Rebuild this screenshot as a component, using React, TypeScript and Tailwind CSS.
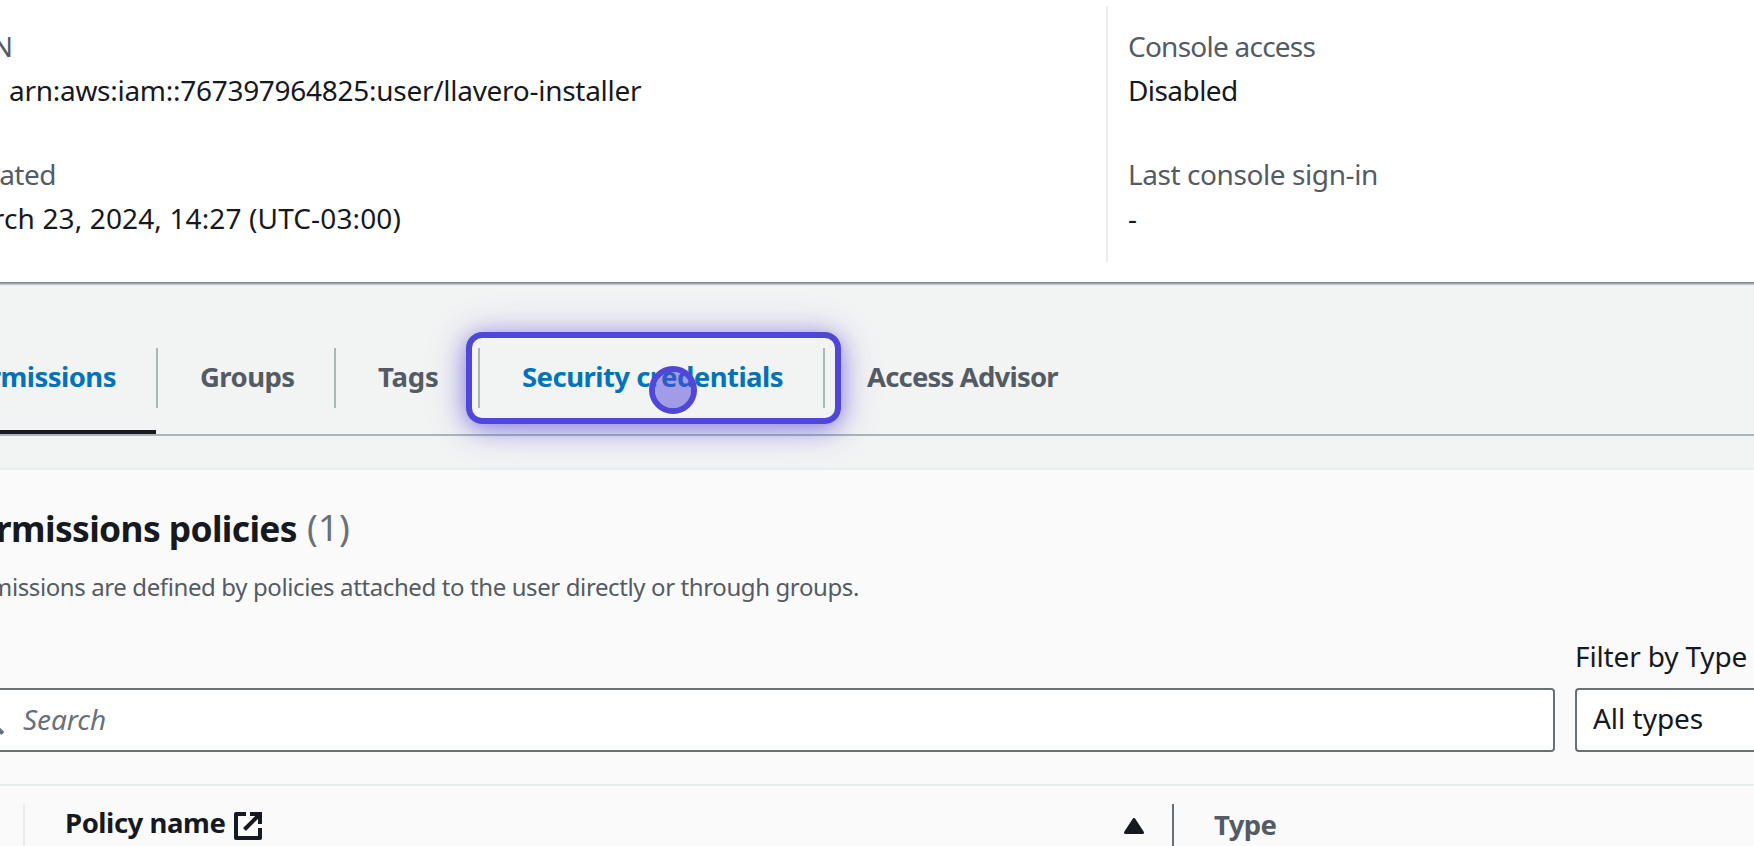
import type { ReactNode } from "react";

/** Text that runs off the left edge of the viewport; its end sits at the box's right edge. */
function Clipped({ className, children }: { className: string; children: ReactNode }) {
  return <div className={`flex justify-end overflow-hidden ${className}`}>{children}</div>;
}

function Separator() {
  return <span className="h-[60px] w-[2px] shrink-0 bg-[#aab7b8]" />;
}

function ExternalIcon() {
  return (
    <svg width="28" height="28" viewBox="0 0 28 28" fill="none" stroke="#16191f" strokeWidth="4">
      <path d="M12 2H2V26H26V16" strokeLinejoin="round" />
      <path d="M16 2H26V12" />
      <path d="M26 2L10.5 17.5" />
    </svg>
  );
}

function Summary() {
  return (
    <section className="relative -mx-4 flex h-[282px] items-start bg-white px-4 pt-[6px] shadow-[0_2px_2px_0_rgba(0,28,36,0.3),2px_2px_2px_0_rgba(0,28,36,0.15),-2px_2px_2px_0_rgba(0,28,36,0.15)]">
      <div className="w-[1106px] shrink-0 pt-[18px]">
        <Clipped className="w-[13px] text-[#545b64]">ARN</Clipped>
        <div className="pl-[9px] tracking-[-0.28px]">arn:aws:iam::767397964825:user/llavero-installer</div>
        <Clipped className="mt-10 w-[56px] tracking-[-0.5px] text-[#545b64]">Created</Clipped>
        <Clipped className="w-[401px] tracking-[0.13px]">March 23, 2024, 14:27 (UTC-03:00)</Clipped>
      </div>
      <div className="h-[256px] border-l-2 border-[#eaeded] pt-[18px] pl-5">
        <div className="tracking-[-0.76px] text-[#545b64]">Console access</div>
        <div className="tracking-[-0.57px]">Disabled</div>
        <div className="mt-10 tracking-[-0.42px] text-[#545b64]">Last console sign-in</div>
        <div>-</div>
      </div>
    </section>
  );
}

function Tabs() {
  return (
    <nav className="relative mt-11 flex h-[110px] border-b-2 border-[#aab7b8] text-[27.5px] font-bold text-[#545b64]">
      <div className="flex w-[156px] items-center border-b-4 border-[#16191f]">
        <Clipped className="mb-[2px] w-[116px] tracking-[-0.53px] text-[#0073bb]">Permissions</Clipped>
      </div>
      <div className="flex h-[104px] items-center">
        <Separator />
        <span className="mb-[2px] w-[176px] pl-[42px] tracking-[-0.57px]">Groups</span>
        <Separator />
        <span className="mb-[2px] w-[142px] pl-[42px] tracking-[-0.2px]">Tags</span>
        <Separator />
        <span className="mb-[2px] w-[343px] pl-[42px] tracking-[-0.53px] text-[#0073bb]">Security credentials</span>
        <Separator />
        <span className="mb-[2px] pl-[42px] tracking-[-0.82px]">Access Advisor</span>
      </div>
    </nav>
  );
}

function Policies() {
  return (
    <section className="mt-8 h-[378px] border-t-2 border-[#eaeded] bg-[#fafafa] pt-9">
      <div className="flex text-[36px]">
        <Clipped className="w-[297px] text-[35.4px] font-bold tracking-[-0.63px]">Permissions policies</Clipped>
        <span className="pl-[10px] tracking-[0.3px] text-[#687078]">(1)</span>
      </div>
      <Clipped className="mt-[17px] w-[859px] text-2xl leading-10 tracking-[-0.39px] text-[#545b64]">
        Permissions are defined by policies attached to the user directly or through groups.
      </Clipped>
      <div className="mt-[27px] flex items-end gap-5">
        <div className="flex h-16 w-[1555px] shrink-0 items-center rounded-r-[4px] border-2 border-l-0 border-[#687078] bg-white">
          <svg width="6" height="32" viewBox="0 0 6 32" fill="none" stroke="#687078" strokeWidth="4">
            <path d="M-8 18.6L2.9 29.5" />
          </svg>
          <span className="pb-[2px] pl-[17px] tracking-[-0.06px] text-[#687078] italic">Search</span>
        </div>
        <div className="shrink-0">
          <div className="mb-[10px] tracking-[-0.15px]">Filter by Type</div>
          <div className="flex h-16 w-[240px] items-center rounded-[4px] border-2 border-[#687078] bg-white pb-[4px] pl-4 tracking-[-0.02px]">
            All types
          </div>
        </div>
      </div>
      <div className="mt-8 flex h-[62px] items-end border-t-2 border-[#eaeded] text-[27.5px] font-bold">
        <div className="h-[42px] w-[25px] border-r-2 border-[#eaeded]" />
        <div className="flex h-[60px] w-[1147px] items-start">
          <span className="pt-[15px] pl-10 tracking-[-0.45px]">Policy name</span>
          <span className="mt-[26px] ml-[9px]">
            <ExternalIcon />
          </span>
          <svg className="mt-8 mr-7 ml-auto" width="20" height="16" viewBox="0 0 20 16">
            <path d="M10 1.5L18.5 14.5H1.5Z" fill="#16191f" stroke="#16191f" strokeWidth="3" strokeLinejoin="round" />
          </svg>
        </div>
        <div className="h-[42px] border-l-2 border-[#687078] pl-10 text-[#545b64]">
          <div className="-mt-[1px] tracking-[-0.65px]">Type</div>
        </div>
      </div>
    </section>
  );
}

export default function App() {
  return (
    <div className="relative h-[846px] w-[1754px] overflow-hidden bg-[#f2f3f3] font-['Noto_Sans',sans-serif] text-[28px] leading-[44px] whitespace-nowrap text-[#16191f]">
      <Summary />
      <Tabs />
      <Policies />
      {/* Highlight ring and click marker over the "Security credentials" tab */}
      <div className="absolute top-[332px] left-[466px] h-[92px] w-[375px] rounded-[16px] border-[6px] border-[#5046d8] shadow-[0_4px_25px_rgba(80,70,216,0.66),0_4px_48px_rgba(80,70,216,0.14)]" />
      <div className="absolute top-[366px] left-[649px] size-12 rounded-full border-[6px] border-[#5046d8] bg-[#5046d8]/50 bg-clip-padding" />
    </div>
  );
}
